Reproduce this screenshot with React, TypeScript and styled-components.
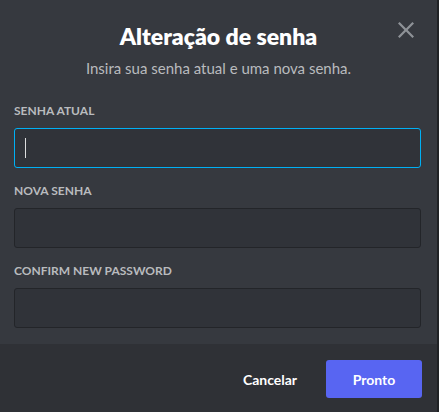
import styled, { createGlobalStyle } from "styled-components";

const GlobalStyle = createGlobalStyle`
  html, body {
    margin: 0;
    padding: 0;
    background: #202225;
  }
  * {
    box-sizing: border-box;
  }
`;

interface IField {
  label: string;
  focused?: boolean;
}

const fields: IField[] = [
  { label: "Senha atual", focused: true },
  { label: "Nova senha" },
  { label: "Confirm new password" },
];

const CloseIcon = () => (
  <svg width="24" height="24" viewBox="0 0 24 24">
    <path
      fill="currentColor"
      d="M18.4 4L12 10.4L5.6 4L4 5.6L10.4 12L4 18.4L5.6 20L12 13.6L18.4 20L20 18.4L13.6 12L20 5.6L18.4 4Z"
    />
  </svg>
);

const App = () => {
  return (
    <>
      <GlobalStyle />
      <Modal>
        <Header>
          <Title>Alteração de senha</Title>
          <Subtitle>Insira sua senha atual e uma nova senha.</Subtitle>
          <CloseButton aria-label="Fechar">
            <CloseIcon />
          </CloseButton>
        </Header>
        <Form>
          {fields.map((field) => (
            <Field key={field.label}>
              <Label>{field.label}</Label>
              <InputBox $focused={field.focused}>
                {field.focused && <Caret />}
              </InputBox>
            </Field>
          ))}
        </Form>
        <Footer>
          <LinkButton>Cancelar</LinkButton>
          <PrimaryButton>Pronto</PrimaryButton>
        </Footer>
      </Modal>
    </>
  );
};

const Modal = styled.div`
  width: 437px;
  height: 412px;
  background-color: #36393f;
  display: flex;
  flex-direction: column;
  font-family: Lato, "Noto Sans", sans-serif;
`;

const Header = styled.div`
  position: relative;
  padding: 21px 16px 0;
  text-align: center;
`;

const Title = styled.h2`
  margin: 0;
  font-size: 23px;
  line-height: 30px;
  font-weight: 800;
  color: #ffffff;
`;

const Subtitle = styled.div`
  margin-top: 7px;
  font-size: 15px;
  line-height: 20px;
  color: #b9bbbe;
`;

const CloseButton = styled.button`
  position: absolute;
  top: 18px;
  right: 19px;
  padding: 0;
  border: none;
  background: none;
  color: #8e9297;
  display: flex;
  cursor: pointer;
`;

const Form = styled.div`
  flex: 1;
  padding: 26px 16px 0 14px;
  display: flex;
  flex-direction: column;
  gap: 16px;
`;

const Field = styled.div`
  display: flex;
  flex-direction: column;
  gap: 10px;
`;

const Label = styled.div`
  font-size: 12px;
  line-height: 14px;
  font-weight: 700;
  text-transform: uppercase;
  color: #b9bbbe;
`;

const InputBox = styled.div<{ $focused?: boolean }>`
  height: 40px;
  border-radius: 3px;
  background-color: #303339;
  border: 1px solid ${(p) => (p.$focused ? "#00b0f4" : "#232529")};
  display: flex;
  align-items: center;
  padding-left: 10px;
`;

const Caret = styled.span`
  width: 1px;
  height: 20px;
  background-color: #dcddde;
`;

const Footer = styled.div`
  height: 68px;
  flex-shrink: 0;
  background-color: #2f3136;
  display: flex;
  align-items: flex-start;
  justify-content: flex-end;
  gap: 8px;
  padding: 16px 15px 0 16px;
`;

const LinkButton = styled.button`
  border: none;
  background: none;
  height: 38px;
  min-width: 96px;
  padding: 0 16px;
  font-family: inherit;
  font-size: 14px;
  font-weight: 700;
  color: #ffffff;
  cursor: pointer;
`;

const PrimaryButton = styled.button`
  border: none;
  height: 38px;
  width: 96px;
  border-radius: 3px;
  background-color: #5865f2;
  font-family: inherit;
  font-size: 14px;
  font-weight: 700;
  color: #ffffff;
  cursor: pointer;
`;

export default App;
